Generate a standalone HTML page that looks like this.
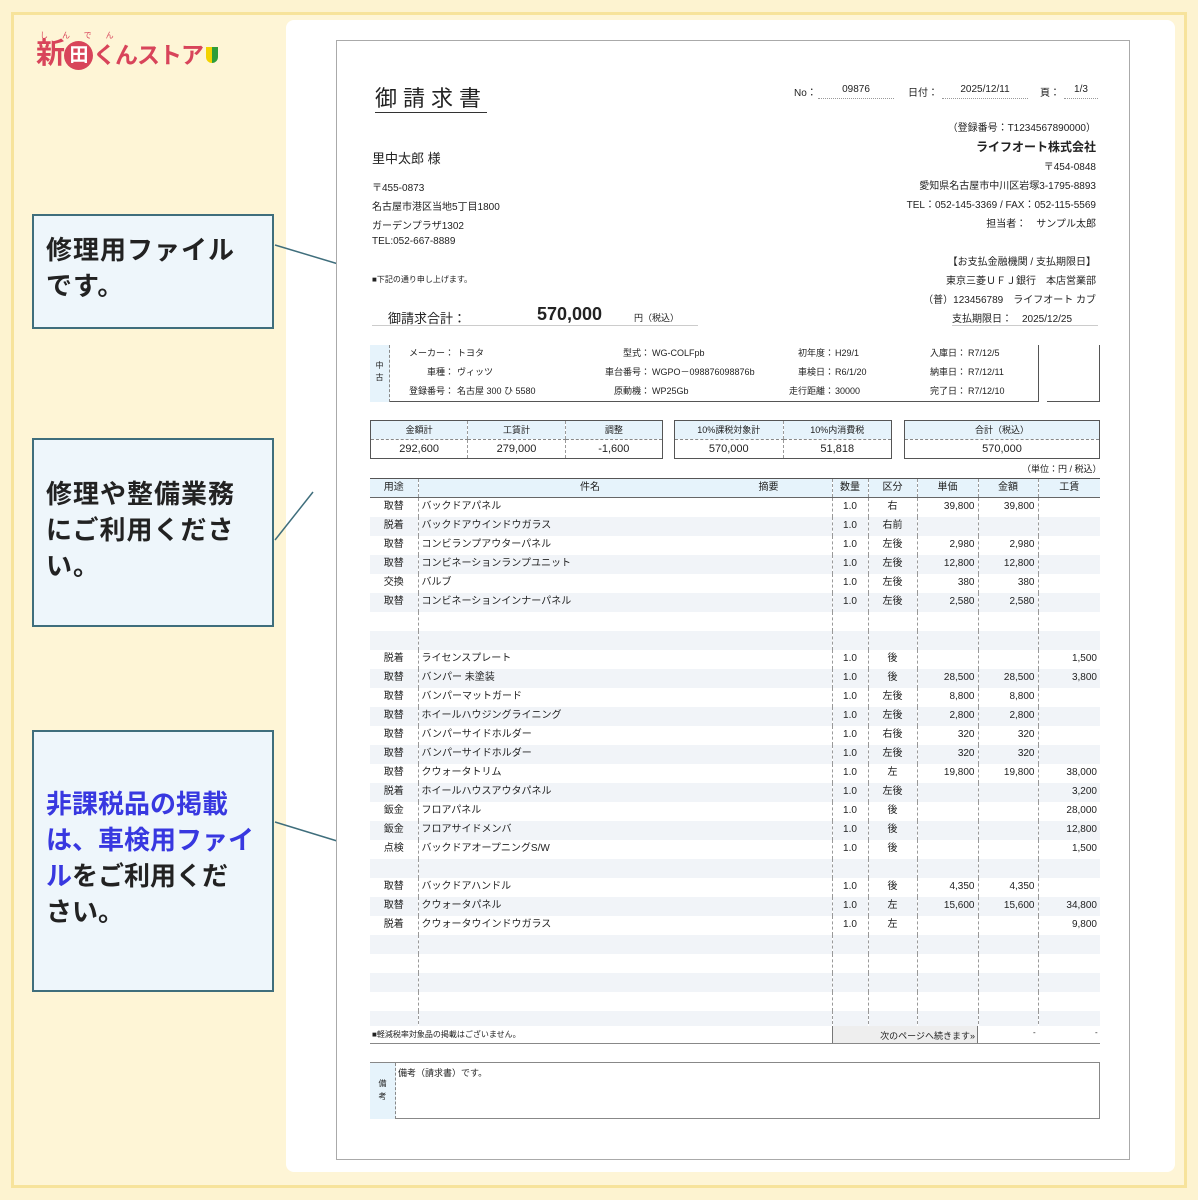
<!DOCTYPE html>
<html><head><meta charset="utf-8"><style>
*{margin:0;padding:0;box-sizing:border-box}
body{width:1198px;height:1200px;background:#fdf3d0;font-family:"Liberation Sans","Noto Sans CJK JP",sans-serif;position:relative;overflow:hidden;color:#222}
.frame{position:absolute;left:11px;top:12px;width:1176px;height:1176px;border:3px solid #f7e39b;background:#fef5d6}
.card{position:absolute;left:286px;top:20px;width:889px;height:1152px;background:#fff;border-radius:8px}
.doc{position:absolute;left:336px;top:40px;width:794px;height:1120px;border:1px solid #aaa;background:#fff}
.a{position:absolute;white-space:nowrap;font-size:10px}
.box{position:absolute;left:32px;width:242px;background:#eef6fb;border:2px solid #3f6e7c;font-weight:bold;font-size:26px;line-height:36px;padding:16px 12px;letter-spacing:1px}
table{border-collapse:collapse;table-layout:fixed;position:absolute}
td{font-size:10px;height:19px;line-height:18px;vertical-align:middle;border-left:1px dashed #999;padding:0 3px;white-space:nowrap;overflow:hidden}
td:first-child{border-left:none;text-align:center}
.rt{text-align:right}.c{text-align:center}
tr:nth-child(odd) td{background:#f1f4f8}
.hd td{background:#e6f3fb!important;text-align:center;border-bottom:1px solid #666;height:18px}
.sum td{text-align:center;font-size:11px;height:19px}
.sum tr:first-child td{background:#e6f3fb;font-size:9px;border-bottom:1px dashed #888}
.sum tr:last-child td{background:#fff}
.sum{border:1px solid #555}
.lb{position:absolute;font-size:9px;line-height:19px;text-align:right;white-space:nowrap}
</style></head><body>
<div class="frame"></div>
<div class="a" style="left:36px;top:36px;font-size:29px;font-weight:bold;color:#d8445a;letter-spacing:-1px;line-height:36px">新<span style="display:inline-block;width:29px;height:29px;border-radius:50%;background:#d8445a;color:#fff;font-size:19px;text-align:center;line-height:29px;vertical-align:2px">田</span><span style="font-size:23px">くんストア</span><span style="display:inline-block;width:12px;height:16px;background:linear-gradient(90deg,#f2d200 50%,#2e9d3a 50%);border-radius:0 0 7px 7px;margin-left:3px"></span></div>
<div class="a" style="left:40px;top:30px;font-size:8px;color:#d8445a;letter-spacing:14px">しんでん</div>
<div class="card"></div>
<div class="box" style="top:214px;height:115px">修理用ファイルです。</div>
<div class="box" style="top:438px;height:189px;padding-top:36px">修理や整備業務にご利用ください。</div>
<div class="box" style="top:730px;height:262px;padding-top:54px;letter-spacing:0;font-size:26px;white-space:nowrap"><span style="color:#3838e0">非課税品の掲載<br>は、車検用ファイ<br>ル</span>をご利用くだ<br>さい。</div>
<svg style="position:absolute;left:0;top:0" width="1198" height="1200"><g stroke="#3f6e7c" stroke-width="1.5"><line x1="275" y1="245" x2="345" y2="266"/><line x1="275" y1="540" x2="313" y2="492"/><line x1="275" y1="822" x2="360" y2="848"/></g></svg>
<div class="doc"></div>
<div class="a" style="left:375px;top:86px;font-size:22px;letter-spacing:6px;border-bottom:1px solid #333;line-height:26px">御請求書</div>
<div class="a" style="left:794px;top:84px">No：</div><div class="a" style="left:818px;top:84px;width:76px;text-align:center;border-bottom:1px dotted #999;height:15px">09876</div>
<div class="a" style="left:908px;top:84px">日付：</div><div class="a" style="left:942px;top:84px;width:86px;text-align:center;border-bottom:1px dotted #999;height:15px">2025/12/11</div>
<div class="a" style="left:1040px;top:84px">頁：</div><div class="a" style="left:1064px;top:84px;width:34px;text-align:center;border-bottom:1px dotted #999;height:15px">1/3</div>
<div class="a" style="left:372px;top:148px;font-size:13px">里中太郎 様</div>
<div class="a" style="left:372px;top:179px">〒455-0873</div>
<div class="a" style="left:372px;top:198px">名古屋市港区当地5丁目1800</div>
<div class="a" style="left:372px;top:217px">ガーデンプラザ1302</div>
<div class="a" style="left:372px;top:236px">TEL:052-667-8889</div>
<div class="a" style="left:372px;top:274px;font-size:8px">■下記の通り申し上げます。</div>
<div class="a" style="left:372px;top:304px;width:326px;border-bottom:1px solid #ccc;height:22px"><span style="position:absolute;left:16px;top:4px;font-size:13px">御請求合計：</span><span style="position:absolute;left:165px;top:0;font-size:18px;font-weight:bold">570,000</span><span style="position:absolute;left:262px;top:7px;font-size:9px">円（税込）</span></div>
<div style="position:absolute;right:102px;top:119px;text-align:right;font-size:10px;line-height:19px">（登録番号：T1234567890000）<br><b style="font-size:12px">ライフオート株式会社</b><br>〒454-0848<br>愛知県名古屋市中川区岩塚3-1795-8893<br>TEL：052-145-3369 / FAX：052-115-5569<br>担当者：　サンプル太郎<br><br>【お支払金融機関 / 支払期限日】<br>東京三菱ＵＦＪ銀行　本店営業部<br>（普）123456789　ライフオート カブ</div>
<div class="a" style="left:952px;top:310px;width:146px;border-bottom:1px solid #ccc;height:16px">支払期限日：　2025/12/25</div>
<div style="position:absolute;left:370px;top:345px;width:669px;height:57px;border:1px solid #555;border-top:none;border-left:none"></div>
<div style="position:absolute;left:370px;top:345px;width:20px;height:57px;background:#e6f3fb;border-right:1px dashed #888;font-size:8px;text-align:center;padding-top:15px;line-height:12px">中<br>古</div>
<div style="position:absolute;left:1047px;top:345px;width:53px;height:57px;border-right:1px solid #555;border-bottom:1px solid #555"></div>
<div class="lb" style="left:390px;top:344px;width:64px">メーカー：<br>車種：<br>登録番号：</div>
<div class="a" style="left:457px;top:344px;font-size:9px;line-height:19px">トヨタ<br>ヴィッツ<br>名古屋 300 ひ 5580</div>
<div class="lb" style="left:588px;top:344px;width:62px">型式：<br>車台番号：<br>原動機：</div>
<div class="a" style="left:652px;top:344px;font-size:9px;line-height:19px">WG-COLFpb<br>WGPO－098876098876b<br>WP25Gb</div>
<div class="lb" style="left:780px;top:344px;width:54px">初年度：<br>車検日：<br>走行距離：</div>
<div class="a" style="left:835px;top:344px;font-size:9px;line-height:19px">H29/1<br>R6/1/20<br>30000</div>
<div class="lb" style="left:920px;top:344px;width:46px">入庫日：<br>納車日：<br>完了日：</div>
<div class="a" style="left:968px;top:344px;font-size:9px;line-height:19px">R7/12/5<br>R7/12/11<br>R7/12/10</div>
<table class="sum" style="left:370px;top:420px;width:293px"><tr><td>金額計</td><td>工賃計</td><td>調整</td></tr><tr><td>292,600</td><td>279,000</td><td>-1,600</td></tr></table>
<table class="sum" style="left:674px;top:420px;width:218px"><tr><td>10%課税対象計</td><td>10%内消費税</td></tr><tr><td>570,000</td><td>51,818</td></tr></table>
<table class="sum" style="left:904px;top:420px;width:196px"><tr><td>合計（税込）</td></tr><tr><td>570,000</td></tr></table>
<div class="a" style="left:1022px;top:462px;font-size:9px">（単位：円 / 税込）</div>
<table style="left:370px;top:478px;width:730px;border-top:1px solid #555;border-bottom:2px solid #888">
<colgroup><col style="width:48px"><col style="width:414px"><col style="width:36px"><col style="width:49px"><col style="width:61px"><col style="width:60px"><col style="width:62px"></colgroup>
<tr class="hd"><td>用途</td><td>件名<span style="float:right;margin-right:50px">摘要</span></td><td>数量</td><td>区分</td><td>単価</td><td>金額</td><td>工賃</td></tr>
<tr><td>取替</td><td>バックドアパネル</td><td class="c">1.0</td><td class="c">右</td><td class="rt">39,800</td><td class="rt">39,800</td><td></td></tr>
<tr><td>脱着</td><td>バックドアウインドウガラス</td><td class="c">1.0</td><td class="c">右前</td><td></td><td></td><td></td></tr>
<tr><td>取替</td><td>コンビランプアウターパネル</td><td class="c">1.0</td><td class="c">左後</td><td class="rt">2,980</td><td class="rt">2,980</td><td></td></tr>
<tr><td>取替</td><td>コンビネーションランプユニット</td><td class="c">1.0</td><td class="c">左後</td><td class="rt">12,800</td><td class="rt">12,800</td><td></td></tr>
<tr><td>交換</td><td>バルブ</td><td class="c">1.0</td><td class="c">左後</td><td class="rt">380</td><td class="rt">380</td><td></td></tr>
<tr><td>取替</td><td>コンビネーションインナーパネル</td><td class="c">1.0</td><td class="c">左後</td><td class="rt">2,580</td><td class="rt">2,580</td><td></td></tr>
<tr><td></td><td></td><td></td><td></td><td></td><td></td><td></td></tr>
<tr><td></td><td></td><td></td><td></td><td></td><td></td><td></td></tr>
<tr><td>脱着</td><td>ライセンスプレート</td><td class="c">1.0</td><td class="c">後</td><td></td><td></td><td class="rt">1,500</td></tr>
<tr><td>取替</td><td>バンパー 未塗装</td><td class="c">1.0</td><td class="c">後</td><td class="rt">28,500</td><td class="rt">28,500</td><td class="rt">3,800</td></tr>
<tr><td>取替</td><td>バンパーマットガード</td><td class="c">1.0</td><td class="c">左後</td><td class="rt">8,800</td><td class="rt">8,800</td><td></td></tr>
<tr><td>取替</td><td>ホイールハウジングライニング</td><td class="c">1.0</td><td class="c">左後</td><td class="rt">2,800</td><td class="rt">2,800</td><td></td></tr>
<tr><td>取替</td><td>バンパーサイドホルダー</td><td class="c">1.0</td><td class="c">右後</td><td class="rt">320</td><td class="rt">320</td><td></td></tr>
<tr><td>取替</td><td>バンパーサイドホルダー</td><td class="c">1.0</td><td class="c">左後</td><td class="rt">320</td><td class="rt">320</td><td></td></tr>
<tr><td>取替</td><td>クウォータトリム</td><td class="c">1.0</td><td class="c">左</td><td class="rt">19,800</td><td class="rt">19,800</td><td class="rt">38,000</td></tr>
<tr><td>脱着</td><td>ホイールハウスアウタパネル</td><td class="c">1.0</td><td class="c">左後</td><td></td><td></td><td class="rt">3,200</td></tr>
<tr><td>鈑金</td><td>フロアパネル</td><td class="c">1.0</td><td class="c">後</td><td></td><td></td><td class="rt">28,000</td></tr>
<tr><td>鈑金</td><td>フロアサイドメンバ</td><td class="c">1.0</td><td class="c">後</td><td></td><td></td><td class="rt">12,800</td></tr>
<tr><td>点検</td><td>バックドアオープニングS/W</td><td class="c">1.0</td><td class="c">後</td><td></td><td></td><td class="rt">1,500</td></tr>
<tr><td></td><td></td><td></td><td></td><td></td><td></td><td></td></tr>
<tr><td>取替</td><td>バックドアハンドル</td><td class="c">1.0</td><td class="c">後</td><td class="rt">4,350</td><td class="rt">4,350</td><td></td></tr>
<tr><td>取替</td><td>クウォータパネル</td><td class="c">1.0</td><td class="c">左</td><td class="rt">15,600</td><td class="rt">15,600</td><td class="rt">34,800</td></tr>
<tr><td>脱着</td><td>クウォータウインドウガラス</td><td class="c">1.0</td><td class="c">左</td><td></td><td></td><td class="rt">9,800</td></tr>
<tr><td></td><td></td><td></td><td></td><td></td><td></td><td></td></tr>
<tr><td></td><td></td><td></td><td></td><td></td><td></td><td></td></tr>
<tr><td></td><td></td><td></td><td></td><td></td><td></td><td></td></tr>
<tr><td></td><td></td><td></td><td></td><td></td><td></td><td></td></tr>
<tr><td></td><td></td><td></td><td></td><td></td><td></td><td></td></tr>
</table>
<div style="position:absolute;left:370px;top:1026px;width:730px;height:18px;border-bottom:1px solid #888;font-size:8px;background:#fff">
<span style="position:absolute;left:2px;top:3px">■軽減税率対象品の掲載はございません。</span>
<div style="position:absolute;left:462px;top:0;width:146px;height:17px;background:#eee;border-left:1px solid #777;border-right:1px solid #777;text-align:right;padding:3px 2px 0 0;font-size:9px">次のページへ続きます»</div>
<span style="position:absolute;left:663px;top:2px">-</span><span style="position:absolute;left:725px;top:2px">-</span></div>
<div style="position:absolute;left:370px;top:1062px;width:730px;height:57px;border:1px solid #888;border-left:none">
<div style="position:absolute;left:0;top:0;width:26px;height:56px;background:#e6f3fb;border-right:1px dashed #888;font-size:8px;text-align:center;padding-top:14px;line-height:13px">備<br>考</div>
<span style="position:absolute;left:28px;top:3px;font-size:9px">備考（請求書）です。</span></div>
</body></html>
